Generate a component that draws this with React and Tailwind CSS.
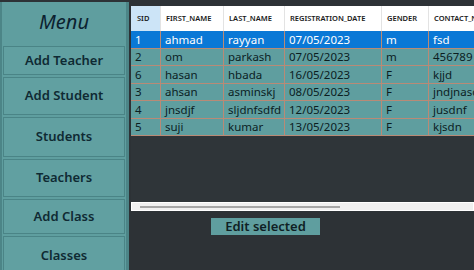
import React from "react";

const cols = [
  { key: "sid", label: "SID", w: "w-[30px]" },
  { key: "first", label: "FIRST_NAME", w: "w-[63px]" },
  { key: "last", label: "LAST_NAME", w: "w-[61px]" },
  { key: "reg", label: "REGISTRATION_DATE", w: "w-[97px]" },
  { key: "gender", label: "GENDER", w: "w-[47px]" },
  { key: "contact", label: "CONTACT_NO", w: "w-[70px]" },
];

const rows = [
  { sid: "1", first: "ahmad", last: "rayyan", reg: "07/05/2023", gender: "m", contact: "fsd" },
  { sid: "2", first: "om", last: "parkash", reg: "07/05/2023", gender: "m", contact: "456789" },
  { sid: "6", first: "hasan", last: "hbada", reg: "16/05/2023", gender: "F", contact: "kjjd" },
  { sid: "3", first: "ahsan", last: "asminskj", reg: "08/05/2023", gender: "F", contact: "jndjnasdn" },
  { sid: "4", first: "jnsdjf", last: "sljdnfsdfd", reg: "12/05/2023", gender: "F", contact: "jusdnf" },
  { sid: "5", first: "suji", last: "kumar", reg: "13/05/2023", gender: "F", contact: "kjsdn" },
];

const menu = [
  { label: "Add Teacher", h: "h-[29px]" },
  { label: "Add Student", h: "h-[38px]" },
  { label: "Students", h: "h-[40px]" },
  { label: "Teachers", h: "h-[38px]" },
  { label: "Add Class", h: "h-[35px]" },
  { label: "Classes", h: "h-[40px]" },
];

function Sidebar() {
  return (
    <div className="w-[129px] h-[268px] mt-[2px] shrink-0 bg-[#5f9e9f] border-l-[2px] border-r-[3px] border-[#4c8587] flex flex-col overflow-hidden">
      <div className="h-[44px] shrink-0 flex items-center justify-center pb-[4px]">
        <span className="italic text-[20px] text-[#0c2230]">Menu</span>
      </div>
      <div className="flex flex-col gap-[2px] px-[1px]">
        {menu.map((m) => (
          <button
            key={m.label}
            className={`${m.h} shrink-0 w-full border border-[#4a8486] bg-[#61a0a1] flex items-center justify-center text-[13px] font-semibold text-[#0f2a33]`}
          >
            {m.label}
          </button>
        ))}
      </div>
    </div>
  );
}

function StudentTable() {
  return (
    <div className="w-[343px] h-[205px] bg-[#2f3539] flex flex-col overflow-hidden">
      <div className="flex h-[25px] bg-white shrink-0">
        {cols.map((c) => (
          <div
            key={c.key}
            className={`${c.w} shrink-0 h-full flex items-center border-r border-[#e3e3e3] text-[7.5px] font-semibold text-[#1a1a1a] whitespace-nowrap overflow-hidden ${
              c.key === "sid" ? "bg-[#cce4f7] pl-[6px]" : "pl-[5px]"
            }`}
          >
            {c.label}
          </div>
        ))}
      </div>
      {rows.map((r, i) => {
        const selected = i === 0;
        return (
          <div
            key={r.sid}
            className={`flex h-[17.5px] shrink-0 border-b border-[#b98a76] ${
              selected ? "bg-[#0a78d6] text-white" : "bg-[#5f9e9f] text-[#0b1d1f]"
            }`}
          >
            {cols.map((c) => (
              <div
                key={c.key}
                className={`${c.w} shrink-0 h-full flex items-center pl-[4px] border-r border-[#b98a76] text-[11.5px] leading-none whitespace-nowrap overflow-hidden`}
              >
                {r[c.key]}
              </div>
            ))}
          </div>
        );
      })}
      <div className="flex-1" />
      <div className="h-[9px] shrink-0 bg-white px-[1px] py-[1px]">
        <div className="h-full bg-[#f0f0f0] flex items-center pl-[8px]">
          <div className="w-[200px] h-[2px] bg-[#a6a6a6]" />
        </div>
      </div>
    </div>
  );
}

export default function App() {
  return (
    <div
      className="w-[474px] h-[270px] bg-[#2d3236] flex overflow-hidden"
      style={{ fontFamily: '"Noto Sans", "Open Sans", sans-serif' }}
    >
      <Sidebar />
      <div className="flex flex-col pt-[6px] pl-[2px]">
        <StudentTable />
        <div className="pl-[80px] pt-[7px]">
          <button className="w-[109px] h-[17px] bg-[#5f9e9f] text-[13px] font-semibold text-[#0f1f24] flex items-center justify-center leading-none">
            Edit selected
          </button>
        </div>
      </div>
    </div>
  );
}
